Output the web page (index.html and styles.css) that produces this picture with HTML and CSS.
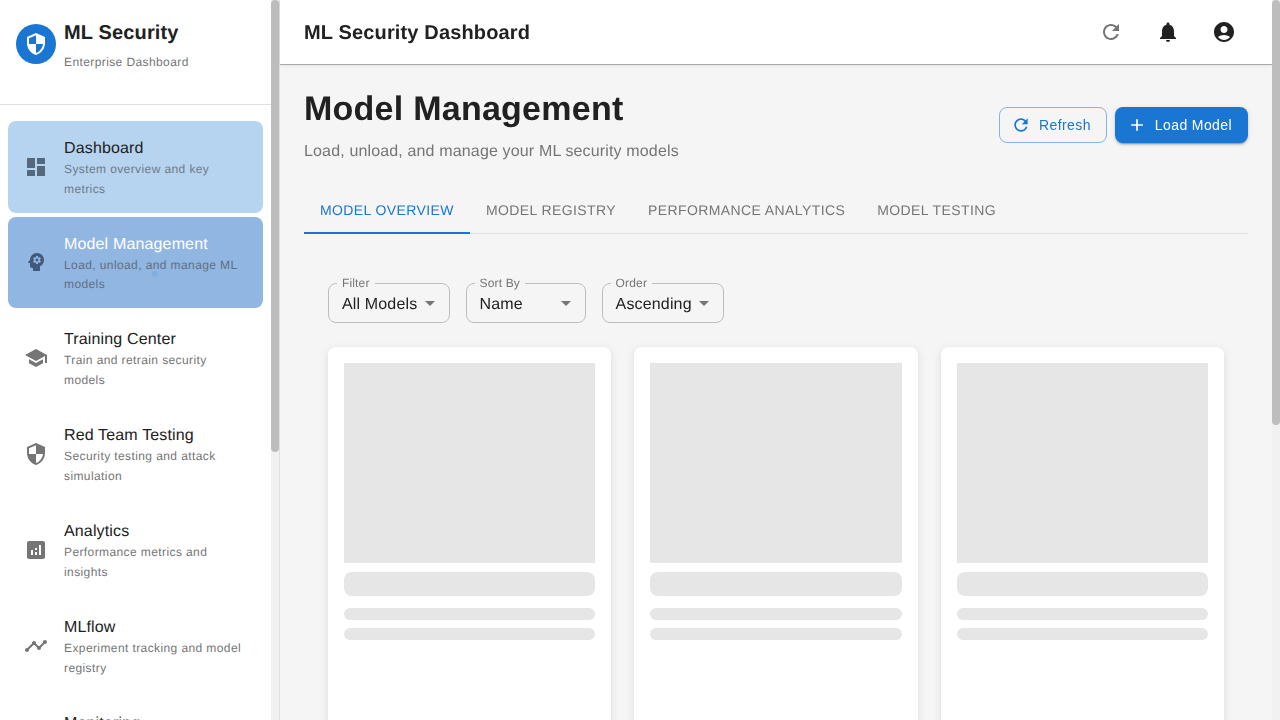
FILE: index.html
```html
<!DOCTYPE html>
<html lang="en">
<head>
<meta charset="utf-8">
<title>ML Security Dashboard</title>
<link rel="stylesheet" href="styles.css">
</head>
<body>
<div class="layout">
  <aside class="sidebar">
    <div class="sidebar-inner">
      <header class="brand">
        <div class="brand-logo">
          <svg class="icon" viewBox="0 0 24 24"><path d="M12 1 3 5v6c0 5.55 3.84 10.74 9 12 5.16-1.26 9-6.45 9-12V5l-9-4zm0 10.99h7c-.53 4.12-3.28 7.79-7 8.94V12H5V6.3l7-3.11v8.8z"/></svg>
        </div>
        <div>
          <div class="brand-title">ML Security</div>
          <div class="brand-sub">Enterprise Dashboard</div>
        </div>
      </header>
      <nav class="nav">
        <a class="nav-item hovered">
          <svg class="icon nav-icon" viewBox="0 0 24 24"><path d="M3 13h8V3H3v10zm0 8h8v-6H3v6zm10 0h8V11h-8v10zm0-18v6h8V3h-8z"/></svg>
          <div class="nav-text"><div class="nav-title">Dashboard</div><div class="nav-sub">System overview and key metrics</div></div>
        </a>
        <a class="nav-item selected">
          <svg class="icon nav-icon" viewBox="0 0 24 24"><path d="M13 8.57c-.79 0-1.43.64-1.43 1.43s.64 1.43 1.43 1.43 1.43-.64 1.43-1.43-.64-1.43-1.43-1.43z"/><path d="M13 3C9.25 3 6.2 5.94 6.02 9.64L4.1 12.2c-.25.33-.01.8.4.8H6v3c0 1.1.9 2 2 2h1v3h7v-4.68c2.36-1.12 4-3.53 4-6.32 0-3.87-3.13-7-7-7zm3 7c0 .13-.01.26-.02.39l.83.66c.08.06.1.16.05.25l-.8 1.39c-.05.09-.16.12-.24.09l-.99-.4c-.21.16-.43.29-.67.39L14 13.83c-.01.1-.1.17-.2.17h-1.6c-.1 0-.18-.07-.2-.17l-.15-1.06c-.25-.1-.47-.23-.68-.39l-.99.4c-.09.03-.2 0-.25-.09l-.8-1.39c-.05-.08-.03-.19.05-.25l.84-.66c-.01-.13-.02-.26-.02-.39s.02-.27.04-.39l-.85-.66c-.08-.06-.1-.16-.05-.26l.8-1.38c.05-.09.15-.12.24-.09l1 .4c.2-.15.43-.29.67-.39L12 6.17c.02-.1.1-.17.2-.17h1.6c.1 0 .18.07.2.17l.15 1.06c.24.1.46.23.67.39l1-.4c.09-.03.2 0 .24.09l.8 1.38c.05.09.03.2-.05.26l-.85.66c.03.12.04.25.04.39z"/></svg>
          <div class="nav-text"><div class="nav-title">Model Management</div><div class="nav-sub">Load, unload, and manage ML models</div></div>
          <span class="ripple"></span>
        </a>
        <a class="nav-item">
          <svg class="icon nav-icon" viewBox="0 0 24 24"><path d="M5 13.18v4L12 21l7-3.82v-4L12 17l-7-3.82zM12 3 1 9l11 6 9-4.91V17h2V9L12 3z"/></svg>
          <div class="nav-text"><div class="nav-title">Training Center</div><div class="nav-sub">Train and retrain security models</div></div>
        </a>
        <a class="nav-item">
          <svg class="icon nav-icon" viewBox="0 0 24 24"><path d="M12 1 3 5v6c0 5.55 3.84 10.74 9 12 5.16-1.26 9-6.45 9-12V5l-9-4zm0 10.99h7c-.53 4.12-3.28 7.79-7 8.94V12H5V6.3l7-3.11v8.8z"/></svg>
          <div class="nav-text"><div class="nav-title">Red Team Testing</div><div class="nav-sub">Security testing and attack simulation</div></div>
        </a>
        <a class="nav-item">
          <svg class="icon nav-icon" viewBox="0 0 24 24"><path d="M19 3H5c-1.1 0-2 .9-2 2v14c0 1.1.9 2 2 2h14c1.1 0 2-.9 2-2V5c0-1.1-.9-2-2-2zM9 17H7v-5h2v5zm4 0h-2v-3h2v3zm0-5h-2v-2h2v2zm4 5h-2V7h2v10z"/></svg>
          <div class="nav-text"><div class="nav-title">Analytics</div><div class="nav-sub">Performance metrics and insights</div></div>
        </a>
        <a class="nav-item">
          <svg class="icon nav-icon" viewBox="0 0 24 24"><path d="M23 8c0 1.1-.9 2-2 2-.18 0-.35-.02-.51-.07l-3.56 3.55c.05.16.07.34.07.52 0 1.1-.9 2-2 2s-2-.9-2-2c0-.18.02-.36.07-.52l-2.55-2.55c-.16.05-.34.07-.52.07s-.36-.02-.52-.07l-4.55 4.56c.05.16.07.33.07.51 0 1.1-.9 2-2 2s-2-.9-2-2 .9-2 2-2c.18 0 .35.02.51.07l4.56-4.55C8.02 9.36 8 9.18 8 9c0-1.1.9-2 2-2s2 .9 2 2c0 .18-.02.36-.07.52l2.55 2.55c.16-.05.34-.07.52-.07s.36.02.52.07l3.55-3.56C19.02 8.35 19 8.18 19 8c0-1.1.9-2 2-2s2 .9 2 2z"/></svg>
          <div class="nav-text"><div class="nav-title">MLflow</div><div class="nav-sub">Experiment tracking and model registry</div></div>
        </a>
        <a class="nav-item">
          <div class="nav-text indent"><div class="nav-title">Monitoring</div></div>
        </a>
      </nav>
    </div>
    <div class="scrolltrack"><div class="scrollthumb thumb-side"></div></div>
  </aside>
  <div class="main">
    <header class="appbar">
      <div class="appbar-title">ML Security Dashboard</div>
      <div class="appbar-actions">
        <button class="icon-btn muted"><svg class="icon" viewBox="0 0 24 24"><path d="M17.65 6.35C16.2 4.9 14.21 4 12 4c-4.42 0-7.99 3.58-7.99 8s3.57 8 7.99 8c3.73 0 6.84-2.55 7.73-6h-2.08c-.82 2.33-3.04 4-5.65 4-3.31 0-6-2.69-6-6s2.69-6 6-6c1.66 0 3.14.69 4.22 1.78L13 11h7V4l-2.35 2.35z"/></svg></button>
        <button class="icon-btn"><svg class="icon" viewBox="0 0 24 24"><path d="M12 22c1.1 0 2-.9 2-2h-4c0 1.1.9 2 2 2zm6-6v-5c0-3.07-1.63-5.64-4.5-6.32V4c0-.83-.67-1.5-1.5-1.5s-1.5.67-1.5 1.5v.68C7.64 5.36 6 7.92 6 11v5l-2 2v1h16v-1l-2-2z"/></svg></button>
        <button class="icon-btn"><svg class="icon" viewBox="0 0 24 24"><path d="M12 2C6.48 2 2 6.48 2 12s4.48 10 10 10 10-4.48 10-10S17.52 2 12 2zm0 4c1.93 0 3.5 1.57 3.5 3.5S13.93 13 12 13s-3.5-1.57-3.5-3.5S10.07 6 12 6zm0 14c-2.03 0-4.43-.82-6.14-2.88C7.55 15.8 9.68 15 12 15s4.45.8 6.14 2.12C16.43 19.18 14.03 20 12 20z"/></svg></button>
      </div>
    </header>
    <main class="content">
      <section class="page-head">
        <div>
          <h1 class="page-title">Model Management</h1>
          <p class="page-sub">Load, unload, and manage your ML security models</p>
        </div>
        <div class="page-actions">
          <button class="btn btn-outline"><svg class="icon btn-icon" viewBox="0 0 24 24"><path d="M17.65 6.35C16.2 4.9 14.21 4 12 4c-4.42 0-7.99 3.58-7.99 8s3.57 8 7.99 8c3.73 0 6.84-2.55 7.73-6h-2.08c-.82 2.33-3.04 4-5.65 4-3.31 0-6-2.69-6-6s2.69-6 6-6c1.66 0 3.14.69 4.22 1.78L13 11h7V4l-2.35 2.35z"/></svg>Refresh</button>
          <button class="btn btn-solid"><svg class="icon btn-icon" viewBox="0 0 24 24"><path d="M19 13h-6v6h-2v-6H5v-2h6V5h2v6h6v2z"/></svg>Load Model</button>
        </div>
      </section>
      <div class="tabs">
        <div class="tab active">MODEL OVERVIEW</div>
        <div class="tab">MODEL REGISTRY</div>
        <div class="tab">PERFORMANCE ANALYTICS</div>
        <div class="tab">MODEL TESTING</div>
      </div>
      <section class="panel">
        <div class="filters">
          <div class="select"><span class="select-label">Filter</span><span>All Models</span><svg class="icon select-arrow" viewBox="0 0 24 24"><path d="M7 10l5 5 5-5z"/></svg></div>
          <div class="select"><span class="select-label">Sort By</span><span>Name</span><svg class="icon select-arrow" viewBox="0 0 24 24"><path d="M7 10l5 5 5-5z"/></svg></div>
          <div class="select"><span class="select-label">Order</span><span>Ascending</span><svg class="icon select-arrow" viewBox="0 0 24 24"><path d="M7 10l5 5 5-5z"/></svg></div>
        </div>
        <div class="cards">
          <article class="card"><div class="sk sk-img"></div><div class="sk sk-head"></div><div class="sk sk-line"></div><div class="sk sk-line"></div></article>
          <article class="card"><div class="sk sk-img"></div><div class="sk sk-head"></div><div class="sk sk-line"></div><div class="sk sk-line"></div></article>
          <article class="card"><div class="sk sk-img"></div><div class="sk sk-head"></div><div class="sk sk-line"></div><div class="sk sk-line"></div></article>
        </div>
      </section>
    </main>
  </div>
  <div class="scrolltrack"><div class="scrollthumb thumb-page"></div></div>
</div>
</body>
</html>
```

FILE: styles.css
```css
* { box-sizing: border-box; }
html, body { margin: 0; padding: 0; height: 100%; overflow: hidden; }
body {
  font-family: "Liberation Sans", Arial, sans-serif;
  color: #212121;
  background: #f5f5f5;
  text-rendering: geometricPrecision;
}

.icon { display: block; width: 24px; height: 24px; fill: currentColor; flex: none; }

.layout { display: flex; height: 720px; overflow: hidden; will-change: opacity; }

.scrolltrack { width: 8px; height: 720px; flex: none; background: #f1f1f1; }
.scrollthumb { width: 8px; background: #bdbdbd; border-radius: 4px; }
.thumb-side { height: 452px; }
.thumb-page { height: 425px; }

.sidebar {
  display: flex;
  width: 280px;
  height: 720px;
  flex: none;
  overflow: hidden;
  background: #fff;
  border-right: 1px solid #e0e0e0;
}
.sidebar-inner { flex: 1; min-width: 0; }

.brand {
  display: flex;
  align-items: flex-start;
  gap: 8px;
  height: 105px;
  padding: 16px;
  border-bottom: 1px solid #e0e0e0;
}
.brand-logo {
  width: 40px;
  height: 40px;
  margin-top: 8px;
  border-radius: 50%;
  background: #1976d2;
  color: #fff;
  display: flex;
  align-items: center;
  justify-content: center;
  flex: none;
}
.brand-title { height: 32px; font-size: 20px; font-weight: 700; line-height: 34px; letter-spacing: 0.15px; }
.brand-sub { margin-top: 4px; font-size: 12px; line-height: 20px; letter-spacing: 0.4px; color: #757575; }

.nav { padding: 15.7px 8px 0; }
.nav-item {
  position: relative;
  display: flex;
  align-items: center;
  padding: 14px 16px;
  margin-bottom: 4px;
  border-radius: 8px;
  color: #757575;
}
.nav-icon { margin-right: 16px; }
.nav-text { min-width: 0; flex: 1; padding-top: 1px; margin-bottom: -1px; }
.nav-text.indent { padding-left: 40px; }
.nav-title { height: 24px; font-size: 16px; line-height: 26px; letter-spacing: 0.15px; color: #212121; }
.nav-sub { font-size: 12px; line-height: 19.92px; letter-spacing: 0.4px; color: #757575; }
.nav-item.hovered { background: #b6d4f0; }
.nav-item.hovered .nav-icon { color: #56687c; }
.nav-item.hovered .nav-sub { color: #6c7a88; }
.nav-item.selected { background: #91b6e1; }
.nav-item.selected .nav-icon { color: #41597a; }
.nav-item.selected .nav-title { color: #fff; }
.nav-item.selected .nav-sub { color: #606f82; }
.ripple {
  position: absolute;
  left: 144px;
  top: 54px;
  width: 6px;
  height: 6px;
  border-radius: 50%;
  background: rgba(25, 118, 210, 0.12);
}

.main { flex: 1; min-width: 0; }
.appbar {
  display: flex;
  align-items: center;
  justify-content: space-between;
  height: 65px;
  padding: 0 28px 0 24px;
  background: #fff;
  border-bottom: 1px solid #aaa;
  box-shadow: 0 1px 3px rgba(0, 0, 0, 0.08);
}
.appbar-title { padding-top: 2px; font-size: 20px; font-weight: 700; letter-spacing: 0.15px; }
.appbar-actions { display: flex; gap: 16.4px; }
.icon-btn {
  width: 40px;
  height: 40px;
  padding: 8px;
  border: 0;
  background: none;
  color: #212121;
}
.icon-btn.muted { color: #757575; }

.content { padding: 22px 24px 24px; }
.page-head { display: flex; justify-content: space-between; align-items: flex-start; height: 99px; }
.page-title { height: 42px; margin: 0; font-size: 34px; line-height: 44px; font-weight: 700; letter-spacing: 0.25px; }
.page-sub { margin: 11px 0 0; font-size: 16px; line-height: 24px; letter-spacing: 0.15px; color: #757575; }
.page-actions { display: flex; gap: 8px; margin-top: 19.7px; }

.btn {
  display: flex;
  align-items: center;
  height: 36px;
  border-radius: 8px;
  font: inherit;
  font-size: 14px;
  letter-spacing: 0.4px;
}
.btn-icon { width: 20px; height: 20px; margin: 0 8px 0 -4px; }
.btn-outline { padding: 0 15px; background: transparent; color: #1976d2; border: 1px solid rgba(25, 118, 210, 0.5); }
.btn-solid {
  padding: 0 16px;
  background: #1976d2;
  color: #fff;
  border: 0;
  box-shadow: 0 3px 1px -2px rgba(0,0,0,.2), 0 2px 2px rgba(0,0,0,.14), 0 1px 5px rgba(0,0,0,.12);
}

.tabs { display: flex; height: 48px; border-bottom: 1px solid #e0e0e0; }
.tab {
  display: flex;
  align-items: center;
  height: 48px;
  padding: 0 16px;
  font-size: 14px;
  letter-spacing: 0.4px;
  color: #757575;
}
.tab.active { color: #1976d2; box-shadow: inset 0 -2px 0 #1976d2; }

.panel { padding: 49px 24px 24px; }
.filters { display: flex; gap: 16px; margin-bottom: 24px; }
.select {
  position: relative;
  display: flex;
  align-items: center;
  min-width: 120px;
  height: 40px;
  padding: 4px 31.3px 0 13px;
  border: 1px solid #bdbdbd;
  border-radius: 8px;
  font-size: 16px;
  letter-spacing: 0.15px;
}
.select-label {
  position: absolute;
  left: 8px;
  top: -7px;
  padding: 0 5px;
  background: #f5f5f5;
  font-size: 12px;
  line-height: 13px;
  color: #757575;
}
.select-arrow { position: absolute; right: 6.5px; top: 7px; color: #757575; }

.cards { display: grid; grid-template-columns: repeat(3, 1fr); gap: 23.4px; }
.card {
  height: 440px;
  padding: 16px;
  background: #fff;
  border-radius: 8px;
  box-shadow: 0 2px 8px rgba(0, 0, 0, 0.1);
}
.sk { background: #e6e6e6; }
.sk-img { height: 200px; }
.sk-head { height: 24px; margin-top: 9px; border-radius: 8px; }
.sk-line { height: 12px; margin-top: 8px; border-radius: 6px; }
.sk-head + .sk-line { margin-top: 12px; }
```
